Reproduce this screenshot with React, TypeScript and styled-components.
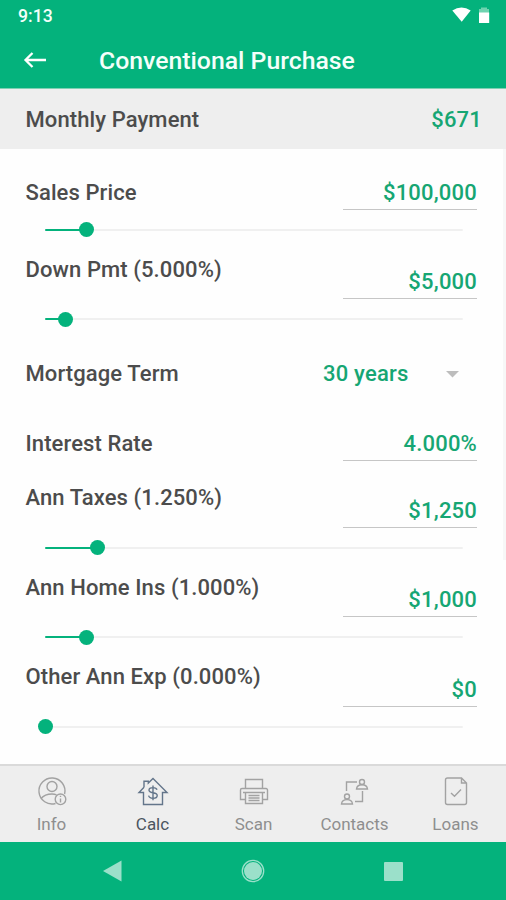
import React from "react";
import styled, { createGlobalStyle } from "styled-components";

const green = "#04b27c";

const GlobalStyle = createGlobalStyle`
  * { box-sizing: border-box; }
  body { margin: 0; background: #fff; font-family: Roboto, "Liberation Sans", sans-serif; }
`;

const Screen = styled.div`
  display: flex;
  flex-direction: column;
  width: 506px;
  height: 900px;
  overflow: hidden;
  background: #fefefe;
`;

const Header = styled.header`
  flex: none;
  height: 89px;
  background: ${green};
  border-bottom: 1px solid #7fd0b3;
  color: #f4fffa;
`;

const StatusBar = styled.div`
  display: flex;
  align-items: center;
  justify-content: space-between;
  height: 32px;
  padding: 0 15px 0 18px;
`;

const Clock = styled.span`
  font-size: 17.6px;
  font-weight: 500;
  line-height: 20px;
`;

const StatusIcons = styled.svg`
  display: block;
  width: 40px;
  height: 20px;
`;

const TitleBar = styled.div`
  display: flex;
  align-items: center;
  height: 56px;
  padding-left: 23px;
`;

const BackIcon = styled.svg`
  display: block;
  width: 24px;
  height: 20px;
  margin-right: 52px;
`;

const Title = styled.h1`
  margin: 0;
  padding-top: 2px;
  font-size: 24.8px;
  font-weight: 500;
  line-height: 30px;
`;

const Summary = styled.section`
  flex: none;
  display: flex;
  align-items: center;
  justify-content: space-between;
  height: 60px;
  padding: 2px 24px 0 25.5px;
  background: #eeeeee;
`;

const Label = styled.span`
  color: #4c4c4c;
  font-size: 22px;
  font-weight: 500;
  line-height: 26px;
  letter-spacing: 0.1px;
  white-space: nowrap;
`;

const Amount = styled(Label)`
  color: #16a673;
  letter-spacing: 0.2px;
`;

const Form = styled.main`
  position: relative;
  flex: 1;
  min-height: 0;
`;

const ScrollTrack = styled.div`
  position: absolute;
  top: 0;
  right: 0;
  width: 3px;
  height: 411px;
  background: #f7f7f7;
`;

const Field = styled.div<{ $height: number; $labelDrop: number }>`
  display: flex;
  justify-content: space-between;
  align-items: flex-end;
  height: ${(p) => p.$height}px;
  padding: 0 29px 0 25.5px;

  > ${Label}:first-child {
    margin-bottom: ${(p) => p.$labelDrop}px;
  }
`;

const ValueBox = styled.div`
  display: flex;
  align-items: flex-end;
  justify-content: flex-end;
  width: 134px;
  height: 34px;
  padding-bottom: 3px;
  border-bottom: 1.5px solid #c6c6c6;
`;

const TermRow = styled.div`
  display: flex;
  align-items: center;
  justify-content: space-between;
  height: 72px;
  padding: 0 47px 1px 25.5px;
`;

const TermPicker = styled.div`
  display: flex;
  align-items: center;
  justify-content: space-between;
  width: 136px;
`;

const Caret = styled.svg`
  display: block;
  width: 13px;
  height: 7px;
`;

const SliderArea = styled.div`
  display: flex;
  align-items: center;
  height: 39.5px;
  padding: 1px 43px 0 45px;
`;

const Track = styled.div`
  position: relative;
  flex: 1;
  height: 2px;
  border-radius: 1px;
  background: #f0f0f0;
`;

const Fill = styled.div`
  height: 2px;
  border-radius: 1px;
  background: ${green};
`;

const Thumb = styled.div`
  position: absolute;
  top: -6.5px;
  width: 15px;
  height: 15px;
  margin-left: -7.5px;
  border-radius: 50%;
  background: ${green};
`;

const TabBar = styled.nav`
  flex: none;
  display: grid;
  grid-template-columns: repeat(5, 1fr);
  height: 78px;
  padding-left: 1px;
  border-top: 2px solid #dadada;
  background: #eeeeee;
`;

const Tab = styled.div<{ $active?: boolean }>`
  display: flex;
  flex-direction: column;
  align-items: center;
  padding-top: 9px;
  color: ${(p) => (p.$active ? "#4b5560" : "#8e8e8e")};
  font-size: 17px;
  line-height: 22px;

  svg {
    display: block;
    width: 32px;
    height: 32px;
    margin-bottom: 6px;
    fill: none;
    stroke: ${(p) => (p.$active ? "#63758a" : "#a2a2a2")};
    stroke-width: 1.4;
  }
`;

const SystemNav = styled.div`
  flex: none;
  height: 58px;
  background: ${green};

  svg { display: block; }
`;

function Slider({ percent }: { percent: number }) {
  return (
    <SliderArea>
      <Track>
        <Fill style={{ width: `${percent}%` }} />
        <Thumb style={{ left: `${percent}%` }} />
      </Track>
    </SliderArea>
  );
}

type EntryProps = { label: string; value: string; height: number; labelDrop: number; percent?: number };

function Entry({ label, value, height, labelDrop, percent }: EntryProps) {
  return (
    <>
      <Field $height={height} $labelDrop={labelDrop}>
        <Label>{label}</Label>
        <ValueBox>
          <Amount>{value}</Amount>
        </ValueBox>
      </Field>
      {percent !== undefined && <Slider percent={percent} />}
    </>
  );
}

const InfoIcon = () => (
  <svg viewBox="0 0 32 32">
    <path d="M19.5 28.500A13 13 0 1 1 28.600 19" />
    <circle cx="16" cy="11.500" r="5" />
    <path d="M5 23.500C7.500 20.500 11.500 19 16 19c1.800 0 3.300.3 4.500.8" />
    <circle cx="24.500" cy="24.300" r="5.300" />
    <path d="M24.500 23.500v4M24.500 20.800v1.300" />
  </svg>
);

const CalcIcon = () => (
  <svg viewBox="0 0 32 32">
    <path d="M7 12.300V6.200h4.300v1.900L16 3.500l14 14h-4.500v12h-19v-12H2L7 12.300" />
    <path d="M20 14.800c-.4-1.500-1.900-2.200-4-2.200-2.300 0-4 .9-4 2.600 0 3.600 8.200 1.600 8.200 5.200 0 1.900-1.800 2.800-4.200 2.800-2.400 0-4-.9-4.400-2.600M16 10.500v14.800" />
  </svg>
);

const ScanIcon = () => (
  <svg viewBox="0 0 32 32">
    <path d="M7.500 13.500V4.500h17v9M7.500 24.500h-5V15A1.500 1.500 0 0 1 4 13.500h24a1.500 1.500 0 0 1 1.500 1.500v9.500h-5" />
    <path d="M7.500 17.500h17v11h-17zM5 17.500h22M10.500 20.500h11M10.500 23h11M10.500 25.500h11" />
  </svg>
);

const ContactsIcon = () => (
  <svg viewBox="0 0 32 32">
    <path d="M7.500 16V7H18M16 26.500h7.500V16" />
    <circle cx="23" cy="7" r="2.500" />
    <path d="M17.500 14c.3-2.900 2.200-4.200 5.500-4.200s5.200 1.300 5.500 4.200Z" />
    <circle cx="8" cy="21.500" r="2.500" />
    <path d="M2.500 29c.3-3 2.200-4.400 5.500-4.400s5.200 1.400 5.500 4.400Z" />
  </svg>
);

const LoansIcon = () => (
  <svg viewBox="0 0 32 32">
    <path d="M7.500 3h14l5 5v19.500a2 2 0 0 1-2 2h-17a2 2 0 0 1-2-2V5a2 2 0 0 1 2-2ZM21.500 3v5h5M11 18l3.500 3.200 6.500-6.700" />
  </svg>
);

const tabs = [
  { name: "Info", Icon: InfoIcon },
  { name: "Calc", Icon: CalcIcon, active: true },
  { name: "Scan", Icon: ScanIcon },
  { name: "Contacts", Icon: ContactsIcon },
  { name: "Loans", Icon: LoansIcon },
];

export default function App() {
  return (
    <Screen>
      <GlobalStyle />
      <Header>
        <StatusBar>
          <Clock>9:13</Clock>
          <StatusIcons viewBox="0 0 40 20">
            <path d="M1.300 4.500Q10.500-1.500 19.700 4.500L10.700 15.800Z" fill="#fff" />
            <path d="M28 3h2V1.500h6V3h2v4H28Z" fill="#6fd3b0" />
            <path d="M28 6.500h10.200V17H28Z" fill="#fff" />
          </StatusIcons>
        </StatusBar>
        <TitleBar>
          <BackIcon viewBox="0 0 24 20" fill="none" stroke="#fff" strokeWidth="2.300">
            <path d="M23 10H2.500M9.500 3 2.500 10l7 7" />
          </BackIcon>
          <Title>Conventional Purchase</Title>
        </TitleBar>
      </Header>
      <Summary>
        <Label>Monthly Payment</Label>
        <Amount>$671</Amount>
      </Summary>
      <Form>
        <Entry label="Sales Price" value="$100,000" height={60.5} labelDrop={4} percent={10} />
        <Entry label="Down Pmt (5.000%)" value="$5,000" height={50} labelDrop={16.5} percent={5} />
        <TermRow>
          <Label>Mortgage Term</Label>
          <TermPicker>
            <Amount>30 years</Amount>
            <Caret viewBox="0 0 13 7">
              <path d="M0 0h13L6.500 6.500Z" fill="#bdbdbd" />
            </Caret>
          </TermPicker>
        </TermRow>
        <Entry label="Interest Rate" value="4.000%" height={50} labelDrop={4} />
        <Entry label="Ann Taxes (1.250%)" value="$1,250" height={67} labelDrop={16.5} percent={12.5} />
        <Entry label="Ann Home Ins (1.000%)" value="$1,000" height={50} labelDrop={16} percent={10} />
        <Entry label="Other Ann Exp (0.000%)" value="$0" height={50} labelDrop={16.5} percent={0} />
        <ScrollTrack />
      </Form>
      <TabBar>
        {tabs.map(({ name, Icon, active }) => (
          <Tab key={name} $active={active}>
            <Icon />
            {name}
          </Tab>
        ))}
      </TabBar>
      <SystemNav>
        <svg width="506" height="58" viewBox="0 0 506 58" fill="#9be0ca">
          <path d="M103 29 121.500 18.500v21Z" />
          <circle cx="253" cy="29" r="9" />
          <circle cx="253" cy="29" r="10.700" fill="none" stroke="#9be0ca" strokeWidth="1.300" />
          <rect x="384" y="20" width="19" height="19" rx="1" />
        </svg>
      </SystemNav>
    </Screen>
  );
}
